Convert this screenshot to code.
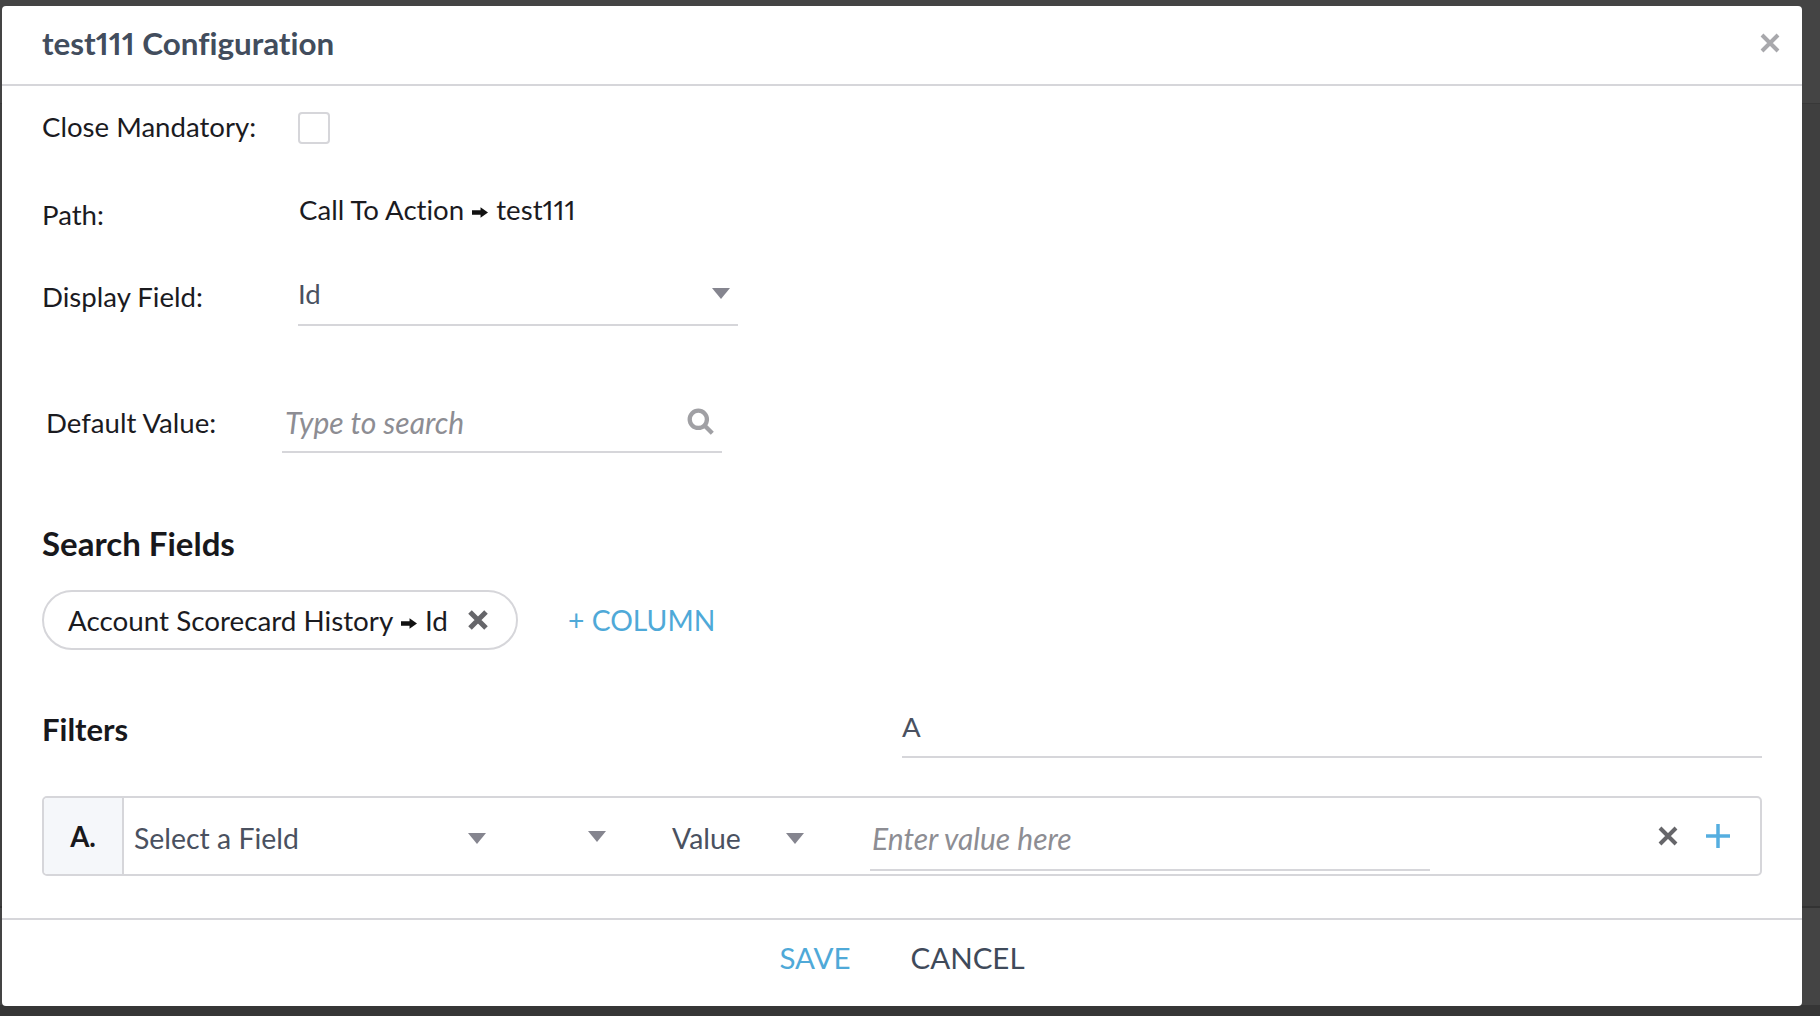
<script>
  const rows = [
    { label: "Close Mandatory:" },
  ];
</script>

<div class="modal">
  <header class="head">
    <h1>test111 Configuration</h1>
    <svg class="close" viewBox="0 0 20 20"><path d="M2 2 L18 18 M18 2 L2 18" /></svg>
  </header>

  <div class="body">
    <div class="row mandatory">
      <span class="label">{rows[0].label}</span>
      <span class="check"></span>
    </div>

    <div class="row path">
      <span class="label">Path:</span>
      <span class="value">Call To Action
        <svg class="arrow" viewBox="0 0 15 10"><path d="M0 3H8V0L15 5 8 10V7H0Z" /></svg>
        test111</span>
    </div>

    <div class="row display">
      <span class="label">Display Field:</span>
      <div class="select">
        <span>Id</span>
        <span class="caret"></span>
      </div>
    </div>

    <div class="row default">
      <span class="label">Default Value:</span>
      <div class="search">
        <span class="placeholder">Type to search</span>
        <svg class="glass" viewBox="0 0 26 26"><circle cx="10.5" cy="10.5" r="8" /><path d="M16.5 16.5 L23.5 23.5" /></svg>
      </div>
    </div>

    <h2 class="search-title">Search Fields</h2>

    <div class="columns">
      <div class="chip">
        <span>Account Scorecard History
          <svg class="arrow" viewBox="0 0 15 10"><path d="M0 3H8V0L15 5 8 10V7H0Z" /></svg>
          Id</span>
        <svg class="chip-x" viewBox="0 0 20 20"><path d="M2 2 L18 18 M18 2 L2 18" /></svg>
      </div>
      <span class="add-column">+ COLUMN</span>
    </div>

    <div class="filters-head">
      <h2>Filters</h2>
      <div class="logic">A</div>
    </div>

    <div class="filter">
      <div class="letter">A.</div>
      <div class="filter-field">
        <span>Select a Field</span>
        <span class="caret"></span>
      </div>
      <div class="filter-op"><span class="caret"></span></div>
      <div class="filter-type">
        <span>Value</span>
        <span class="caret"></span>
      </div>
      <div class="filter-input"><span class="placeholder">Enter value here</span></div>
      <svg class="row-x" viewBox="0 0 20 20"><path d="M2 2 L18 18 M18 2 L2 18" /></svg>
      <svg class="row-plus" viewBox="0 0 24 24"><path d="M12 0V24 M0 12H24" /></svg>
    </div>
  </div>

  <footer class="foot">
    <button class="save">SAVE</button>
    <button class="cancel">CANCEL</button>
  </footer>
</div>

<style>
  :global(body) {
    margin: 0;
    height: 1016px;
    overflow: hidden;
    background: linear-gradient(#444 0 103px, #383838 103px 104px, #3f3f3f 104px 906px, #333 906px 908px, #444 908px 1005px, #363636 1005px);
    font-family: Lato, "Open Sans", sans-serif;
    font-variant-ligatures: none;
    font-feature-settings: "pnum", "liga" 0;
  }

  .modal {
    box-sizing: border-box;
    width: 1800px;
    height: 1000px;
    margin: 6px 0 0 2px;
    background: #fff;
    border-radius: 4px;
    display: flex;
    flex-direction: column;
    color: #1b1b1f;
  }

  .head {
    height: 80px;
    flex: none;
    box-sizing: border-box;
    padding: 0 22px 4px 40px;
    border-bottom: 2px solid #d6d6da;
    display: flex;
    align-items: center;
    justify-content: space-between;
  }

  h1 {
    margin: 0;
    font-size: 31.4px;
    font-weight: 700;
    color: #424d5d;
  }

  .close {
    width: 20px;
    height: 20px;
    fill: none;
    stroke: #a8a8ac;
    stroke-width: 4;
  }

  .body {
    flex: 1;
    padding: 0 40px;
    font-size: 27.6px;
  }

  .row {
    display: flex;
    align-items: center;
  }

  .label {
    width: 256px;
    flex: none;
  }

  .mandatory {
    height: 83px;
  }

  .mandatory .label {
    padding-bottom: 3px;
  }

  .check {
    width: 28px;
    height: 28px;
    border: 2px solid #d6d6da;
    border-radius: 4px;
  }

  .path {
    height: 82px;
    align-items: flex-start;
    padding-top: 24px;
    box-sizing: border-box;
  }

  .path .label {
    width: 257px;
    padding-top: 5px;
    box-sizing: border-box;
  }

  .arrow {
    width: 16px;
    height: 11px;
    fill: #111;
    margin: 0 1px;
    vertical-align: 2px;
  }

  .display {
    height: 86px;
    align-items: flex-start;
    padding-top: 13px;
    box-sizing: border-box;
  }

  .display .label {
    padding-top: 16px;
  }

  .select {
    box-sizing: border-box;
    width: 440px;
    height: 62px;
    border-bottom: 2px solid #d6d6da;
    display: flex;
    align-items: center;
    justify-content: space-between;
    padding: 0 8px 1px 0;
    color: #4a5160;
  }

  .caret {
    width: 0;
    height: 0;
    border-left: 9.5px solid transparent;
    border-right: 9.5px solid transparent;
    border-top: 11px solid #85858f;
    flex: none;
  }

  .default {
    margin-top: 52px;
    height: 70px;
    align-items: flex-start;
    padding-left: 4px;
  }

  .default .label {
    width: 236px;
    padding-top: 17px;
  }

  .search {
    box-sizing: border-box;
    width: 440px;
    height: 64px;
    border-bottom: 2px solid #d6d6da;
    display: flex;
    align-items: center;
    justify-content: space-between;
    padding: 4px 7px 0 3px;
  }

  .placeholder {
    font-style: italic;
    font-size: 30px;
    color: #8d8d93;
  }

  .glass {
    width: 28px;
    height: 28px;
    fill: none;
    stroke: #a0a0a4;
    stroke-width: 4;
  }

  h2 {
    margin: 0;
    font-size: 33px;
    font-weight: 700;
    color: #18181c;
  }

  .search-title {
    margin-top: 66px;
    line-height: 36px;
  }

  .columns {
    display: flex;
    align-items: center;
    margin-top: 29px;
  }

  .chip {
    box-sizing: border-box;
    width: 476px;
    height: 60px;
    border: 2px solid #d6d6da;
    border-radius: 30px;
    display: flex;
    align-items: center;
    justify-content: space-between;
    padding: 0 28px 0 24px;
    font-size: 27.8px;
  }

  .chip-x {
    width: 20px;
    height: 20px;
    fill: none;
    stroke: #66666a;
    stroke-width: 5;
  }

  .add-column {
    margin-left: 50px;
    font-size: 28.3px;
    color: #4fa9d8;
  }

  .filters-head {
    display: flex;
    align-items: flex-start;
    margin-top: 46px;
  }

  .filters-head h2 {
    width: 860px;
    flex: none;
    line-height: 66px;
    font-size: 31px;
  }

  .logic {
    flex: 1;
    height: 60px;
    line-height: 62px;
    border-bottom: 2px solid #d6d6da;
    color: #4a5160;
  }

  .filter {
    box-sizing: border-box;
    height: 80px;
    margin-top: 34px;
    border: 2px solid #d6d6da;
    border-radius: 5px;
    display: flex;
    align-items: center;
    color: #4a5160;
  }

  .letter {
    box-sizing: border-box;
    width: 80px;
    height: 100%;
    background: #f5f7fa;
    border-right: 2px solid #d6d6da;
    border-radius: 4px 0 0 4px;
    display: flex;
    align-items: center;
    justify-content: center;
    font-weight: 700;
    color: #18181c;
    flex: none;
  }

  .filter-field {
    width: 362px;
    box-sizing: border-box;
    padding-left: 10px;
    display: flex;
    align-items: center;
    justify-content: space-between;
    flex: none;
    padding-top: 4px;
    font-size: 28.4px;
  }

  .filter-op {
    width: 120px;
    display: flex;
    justify-content: flex-end;
    flex: none;
  }

  .filter-type {
    width: 198px;
    box-sizing: border-box;
    padding-left: 66px;
    display: flex;
    align-items: center;
    justify-content: space-between;
    flex: none;
    padding-top: 4px;
    font-size: 28.4px;
  }

  .filter-input {
    box-sizing: border-box;
    width: 560px;
    height: 55px;
    margin-left: 66px;
    margin-bottom: 3px;
    align-self: flex-end;
    padding: 0 2px 10px;
    border-bottom: 2px solid #d6d6da;
    display: flex;
    align-items: center;
    flex: none;
  }

  .row-x {
    width: 20px;
    height: 20px;
    margin-left: 228px;
    fill: none;
    stroke: #66666a;
    stroke-width: 4;
    flex: none;
  }

  .row-plus {
    width: 24px;
    height: 24px;
    margin-left: 28px;
    fill: none;
    stroke: #55aee0;
    stroke-width: 3.5;
    flex: none;
  }

  .foot {
    flex: none;
    height: 88px;
    box-sizing: border-box;
    padding-bottom: 12px;
    border-top: 2px solid #d6d6da;
    display: flex;
    align-items: center;
    justify-content: center;
    gap: 60px;
  }

  button {
    border: none;
    background: none;
    padding: 0;
    font-family: inherit;
    font-size: 29.5px;
  }

  .save {
    color: #4fa9d8;
  }

  .cancel {
    color: #3f4a5a;
  }
</style>
